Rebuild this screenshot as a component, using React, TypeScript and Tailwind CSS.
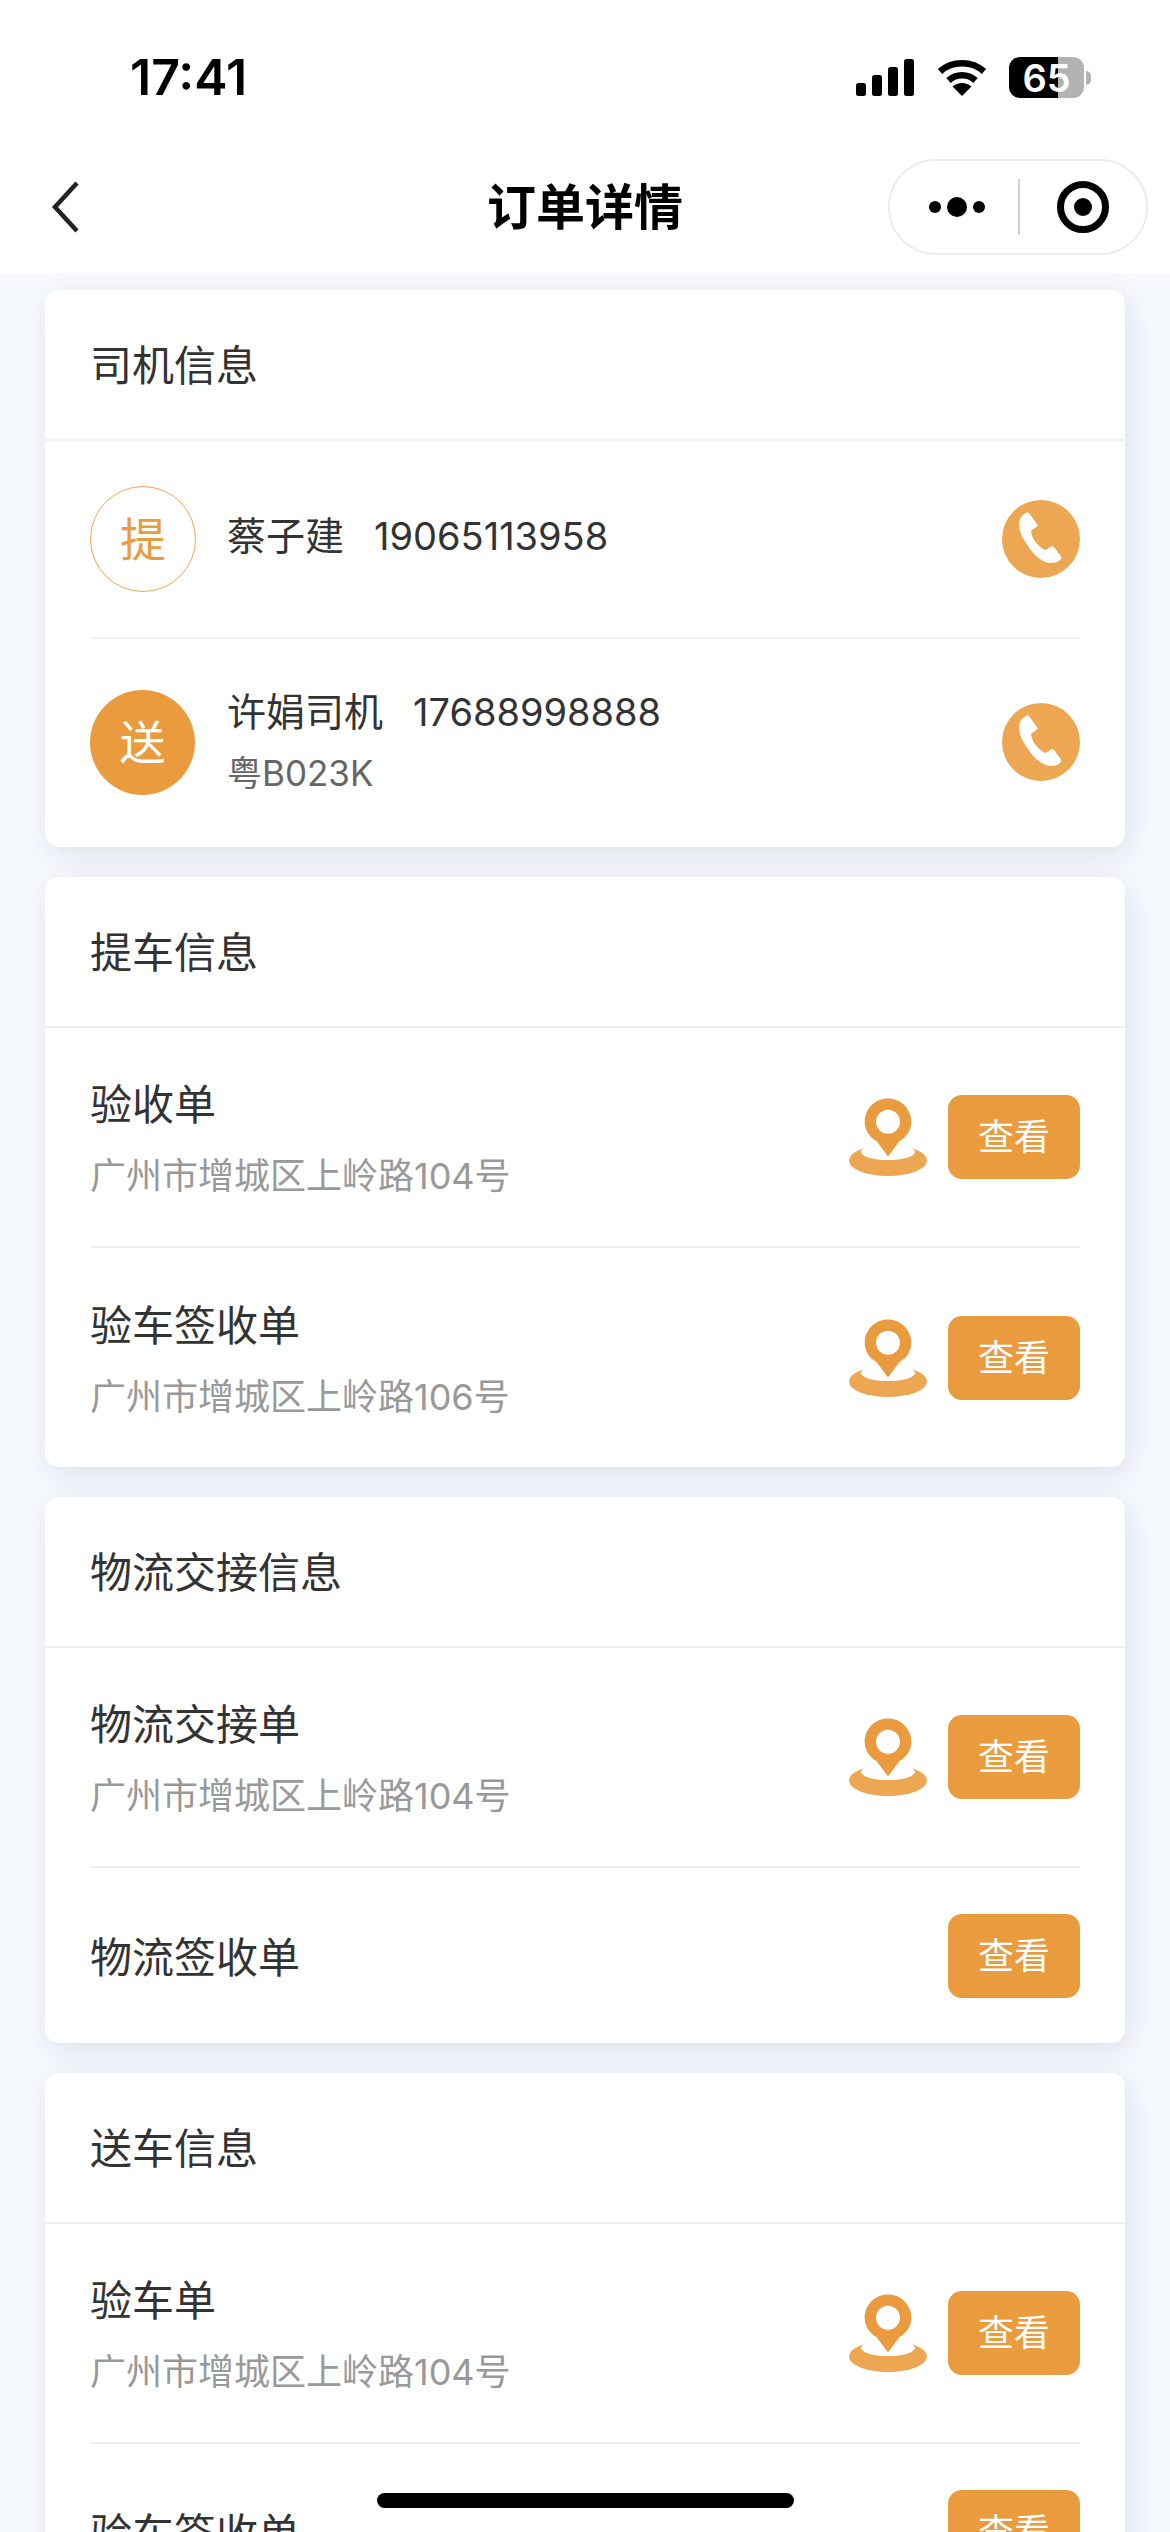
const Phone = () => (
  <svg viewBox="0 0 78 78" className="w-[78px] h-[78px] shrink-0">
    <circle cx="39" cy="39" r="39" fill="#eda651" />
    <path fill="#fff" d="M24 13C25 12 26 12 27 13L35 24C36 25 35.500 26 35 26.500L30 30C29 31 29 32 29.500 33.500C31 40 37 47 42 49.500C43.500 50 44.500 50 45.500 49L49 46.500C50 46 51 46 52 47L59 56.500C59.500 57.500 59.500 58 59 59C56 62 53 63 49 63C42 63 33 57 26 46C19 36 17 30 17 24C17 19 20 15 24 13Z" />
  </svg>
);

const Pin = () => (
  <svg viewBox="0 0 78 78" className="w-[78px] h-[78px] shrink-0">
    <ellipse cx="39" cy="62.500" rx="39" ry="15.500" fill="#eda651" />
    <ellipse cx="39" cy="54" rx="27" ry="8" fill="#fff" />
    <path fill="#e99b3e" fillRule="evenodd" d="M39 0.500C51.900 0.500 62.300 11 62.300 23.700C62.300 32 57.500 39.500 50.500 43L39 58.500L27.500 43C20.500 39.500 15.700 32 15.700 23.700C15.700 11 26.100 0.500 39 0.500ZM39 11.700A12 12 0 1 0 39 35.700A12 12 0 1 0 39 11.700Z" />
  </svg>
);

const ViewButton = () => (
  <div className="w-[132px] h-[84px] rounded-[14px] bg-[#e99b3e] text-white text-[36px] leading-none flex items-center justify-center shrink-0">
    查看
  </div>
);

const Card = ({ title, children }: { title: string; children: React.ReactNode }) => (
  <section className="bg-white rounded-[14px] shadow-[4px_8px_30px_rgba(30,40,60,0.11)]">
    <div className="h-[151px] flex items-center px-[45px] pt-[2px] text-[42px] text-[#333] border-b-2 border-[#f0f0f0]">{title}</div>
    <div className="px-[45px]">{children}</div>
  </section>
);

const DocRow = ({ title, address, pin = true, last = false }: { title: string; address?: string; pin?: boolean; last?: boolean }) => (
  <div className={`flex items-center justify-between ${address ? (last ? "h-[219px]" : "h-[220px]") : "h-[175px]"} ${last ? "" : "border-b-2 border-[#f0f0f0]"}`}>
    <div className={`min-w-0 ${address ? "pt-[6px]" : "pt-[4px]"}`}>
      <div className="text-[42px] leading-[72px] text-[#333]">{title}</div>
      {address && <div className="text-[36px] leading-[70px] text-[#999]">{address}</div>}
    </div>
    <div className="flex items-center gap-[21px]">
      {pin && <Pin />}
      <ViewButton />
    </div>
  </div>
);

export default function App() {
  return (
    <div className="relative h-[2532px] overflow-hidden bg-[#f6f9fe] [font-family:'Inter','Noto_Sans_CJK_SC',sans-serif]">
      <header className="bg-white h-[273px] relative z-10">
        <div className="h-[141px] flex items-start justify-between pl-[130px] pr-[79px] pt-[57px]">
          <div className="text-[50px] leading-[41px] font-semibold text-black">17:41</div>
          <div className="flex items-center">
            <svg viewBox="0 0 58 37" className="w-[58px] h-[37px]">
              <rect x="0" y="24" width="10" height="13" rx="2.500" />
              <rect x="16" y="16" width="10" height="21" rx="2.500" />
              <rect x="32" y="8" width="10" height="29" rx="2.500" />
              <rect x="48" y="0" width="10" height="37" rx="2.500" />
            </svg>
            <svg viewBox="0 0 50 37" className="w-[50px] h-[37px] ml-[23px]">
              <path d="M3 12.500C15 1.500 35 1.500 47 12.500" fill="none" stroke="#000" strokeWidth="6.500" />
              <path d="M11.500 21.500C19 14.500 31 14.500 38.500 21.500" fill="none" stroke="#000" strokeWidth="6.500" />
              <path d="M15.500 27.500C20.500 22.800 29.500 22.800 34.500 27.500L25 37Z" />
            </svg>
            <div className="ml-[22px] w-[75px] h-[41px] rounded-[11px] bg-[linear-gradient(90deg,#000_65%,#b3b3b3_65%)] flex items-center justify-center text-white text-[38px] leading-none font-semibold">
              65
            </div>
            <div className="ml-[2px] w-[5px] h-[14px] rounded-r-full bg-[#b3b3b3]" />
          </div>
        </div>
        <nav className="h-[132px] grid grid-cols-[1fr_auto_1fr] items-center">
          <svg viewBox="0 0 30 52" className="w-[30px] h-[52px] ml-[50px]">
            <path d="M27 2L5 26L27 50" fill="none" stroke="#222" strokeWidth="4.500" />
          </svg>
          <div className="text-[49px] leading-none font-semibold text-black">订单详情</div>
          <div className="justify-self-end mr-[22px] w-[260px] h-[96px] rounded-full border-2 border-[#ececec] flex items-center">
            <div className="w-[128px] flex items-center justify-center gap-[6px] pl-[6px]">
              <span className="w-[12px] h-[12px] rounded-full bg-black" />
              <span className="w-[20px] h-[20px] rounded-full bg-black" />
              <span className="w-[12px] h-[12px] rounded-full bg-black" />
            </div>
            <div className="w-[2px] h-[56px] bg-[#d0d0d0]" />
            <div className="flex-1 flex items-center justify-center">
              <div className="w-[52px] h-[52px] rounded-full border-[7px] border-black flex items-center justify-center">
                <span className="w-[18px] h-[18px] rounded-full bg-black" />
              </div>
            </div>
          </div>
        </nav>
      </header>

      <main className="px-[45px] pt-[17px] flex flex-col gap-[30px]">
        <Card title="司机信息">
          <div className="h-[198px] flex items-center justify-between border-b-2 border-[#f0f0f0]">
            <div className="flex items-center gap-[31px]">
              <div className="w-[106px] h-[106px] rounded-full border border-[#eda651] text-[#e99b3e] text-[46px] leading-none flex items-center justify-center">提</div>
              <div className="text-[39px] leading-[62px] text-[#333] -mt-[6px]">蔡子建<span className="ml-[30px] text-[38px]">19065113958</span></div>
            </div>
            <Phone />
          </div>
          <div className="h-[208px] pb-[2px] flex items-center justify-between">
            <div className="flex items-center gap-[32px]">
              <div className="w-[105px] h-[105px] rounded-full bg-[#e99b3e] text-white text-[46px] leading-none flex items-center justify-center">送</div>
              <div className="pt-[2px]">
                <div className="text-[39px] leading-[60px] text-[#333]">许娟司机<span className="ml-[30px] text-[38px]">17688998888</span></div>
                <div className="text-[35px] leading-[62px] text-[#666]">粤B023K</div>
              </div>
            </div>
            <Phone />
          </div>
        </Card>

        <Card title="提车信息">
          <DocRow title="验收单" address="广州市增城区上岭路104号" />
          <DocRow title="验车签收单" address="广州市增城区上岭路106号" last />
        </Card>

        <Card title="物流交接信息">
          <DocRow title="物流交接单" address="广州市增城区上岭路104号" />
          <DocRow title="物流签收单" pin={false} last />
        </Card>

        <Card title="送车信息">
          <DocRow title="验车单" address="广州市增城区上岭路104号" />
          <DocRow title="验车签收单" pin={false} last />
        </Card>
      </main>

      <div className="absolute left-[377px] top-[2493px] w-[417px] h-[15px] rounded-full bg-black z-20" />
    </div>
  );
}
